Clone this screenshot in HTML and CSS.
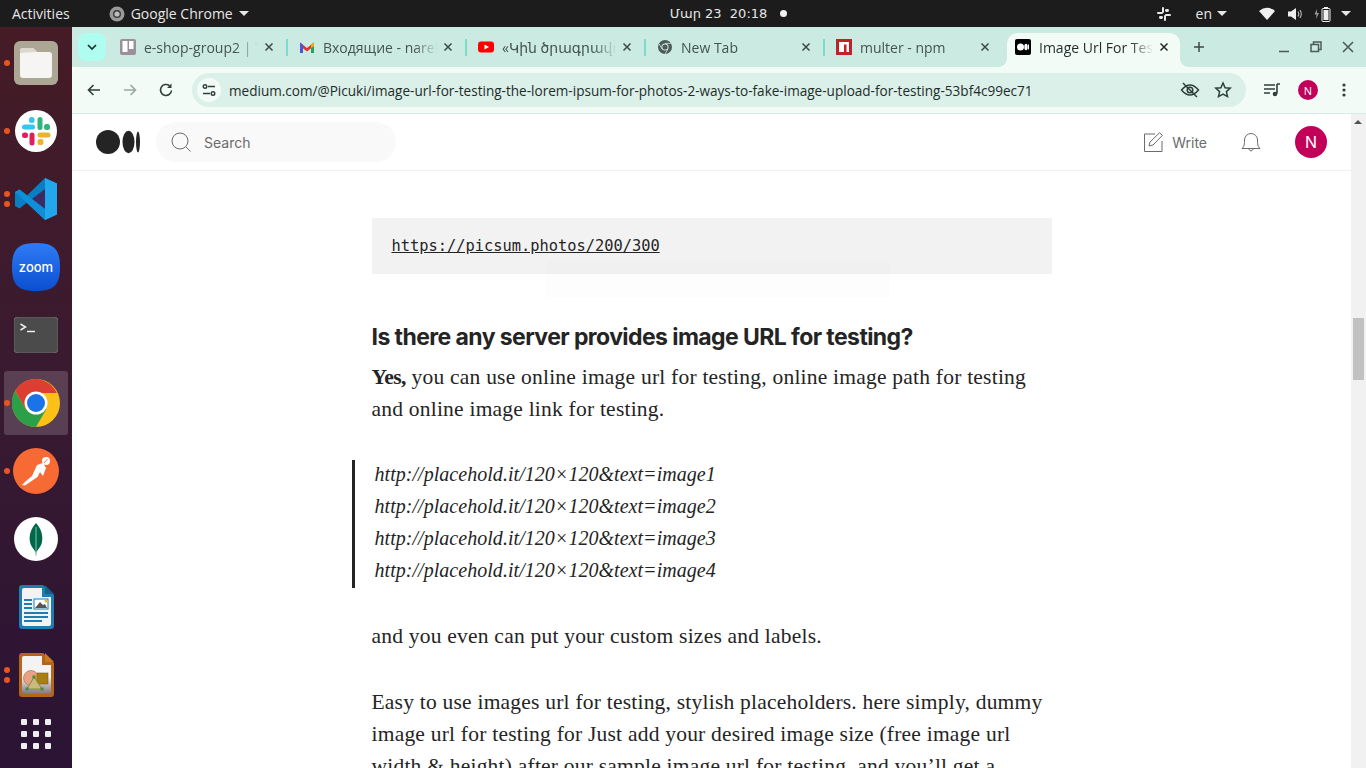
FILE: index.html
```html
<!DOCTYPE html>
<html>

<head>
    <meta charset="utf-8">
    <title>Image Url For Testing</title>
    <link rel="stylesheet" href="styles.css">
</head>

<body>
    <!-- top bar -->
    <header class="topbar">
        <span class="top-activities">Activities</span>
        <span class="top-app">
            <svg width="16" height="16" viewBox="0 0 16 16"><circle cx="8" cy="8" r="7.5" fill="#9a9a9a"/><circle cx="8" cy="8" r="4" fill="#3a3a3a"/><circle cx="8" cy="8" r="2.600" fill="#bdbdbd"/></svg>
            Google Chrome
            <i class="caret"></i>
        </span>
        <span class="top-clock">Մար 23&nbsp;&nbsp;20:18<i class="clock-dot"></i></span>
        <span class="top-tray">
            <svg class="tray-slack" width="14" height="14" viewBox="0 0 14 14" fill="#e8e8e8"><rect x="0" y="5" width="6" height="2" rx="1"/><rect x="8" y="7" width="6" height="2" rx="1"/><rect x="5" y="0" width="2" height="6" rx="1"/><rect x="7" y="8" width="2" height="6" rx="1"/><rect x="8" y="2" width="4" height="3" rx="1.400"/><rect x="2" y="9" width="4" height="3" rx="1.400"/></svg>
            <span class="tray-lang">en<i class="caret"></i></span>
            <svg class="tray-wifi" width="16" height="13" viewBox="0 0 16 13"><path d="M0 4 Q8 -2.500 16 4 L8 13Z" fill="#f0f0f0"/></svg>
            <svg class="tray-sound" width="15" height="14" viewBox="0 0 15 14"><path d="M0 4.500h3L8 1v12L3 9.500H0z" fill="#eee"/><path d="M10 4.500q1.500 2.500 0 5M12 3q2.500 4 0 8" fill="none" stroke="#bbb" stroke-width="1.100"/></svg>
            <svg class="tray-batt" width="18" height="16" viewBox="0 0 18 16"><path d="M3 3 0.500 8.500h2L2 13l3-6H3z" fill="#999"/><rect x="8" y="2.500" width="8" height="13" rx="1" fill="#1c1c1c" stroke="#eee"/><rect x="10" y="1" width="4" height="1.500" fill="#eee"/><rect x="9.500" y="4" width="5" height="10" fill="#eee"/></svg>
            <i class="caret"></i>
        </span>
    </header>

    <div class="desktop">
        <!-- dock -->
        <nav class="dock">
            <div class="dock-item">
                <i class="run-dot"></i>
                <svg width="44" height="44" viewBox="0 0 44 44"><rect width="44" height="44" rx="6" fill="#aca695"/><path d="M6 10q0-3 3-3h10l4 4h12q3 0 3 3v20q0 3-3 3H9q-3 0-3-3z" fill="#f7f5f3"/><path d="M6 12V10q0-3 3-3h10l4 4z" fill="#dcd8cf"/></svg>
            </div>
            <div class="dock-item">
                <i class="run-dot"></i>
                <svg width="42" height="42" viewBox="0 0 42 42"><circle cx="21" cy="21" r="21" fill="#fff"/><rect x="22.500" y="7" width="5" height="13" rx="2.500" fill="#2eb67d"/><rect x="29" y="14" width="6" height="6" rx="2.500" fill="#2eb67d"/><rect x="22.500" y="22.500" width="13" height="5" rx="2.500" fill="#ecb22e"/><rect x="22.500" y="29" width="6" height="6" rx="2.500" fill="#ecb22e"/><rect x="14.500" y="22.500" width="5" height="13" rx="2.500" fill="#e01e5a"/><rect x="7" y="22.500" width="6" height="5.500" rx="2.500" fill="#e01e5a"/><rect x="7" y="14.500" width="13" height="5" rx="2.500" fill="#36c5f0"/><rect x="14" y="7" width="5.500" height="6" rx="2.500" fill="#36c5f0"/></svg>
            </div>
            <div class="dock-item">
                <i class="run-dot dot-up"></i>
                <i class="run-dot dot-down"></i>
                <svg width="42" height="42" viewBox="0 0 42 42"><path d="M30 0 42 5.500v31L30 42 12 24.500 4.500 30.500 0 28V14l4.500-2.500L12 17.500z" fill="#0a7ec2"/><path d="M30 0 42 5.500v31L30 42z" fill="#22a7ef"/><path d="M30 11 17 21l13 10z" fill="#43205a" fill-opacity=".9"/><path d="M4.500 11.500 30 31v11L0 14z" fill="#0f8fd8"/></svg>
            </div>
            <div class="dock-item">
                <svg width="48" height="48" viewBox="0 0 48 48"><defs><linearGradient id="zoomBg" x1="0" y1="0" x2="0" y2="1"><stop offset="0" stop-color="#2f7bf6"/><stop offset="1" stop-color="#0a4fd0"/></linearGradient></defs><path d="M24 0C42 0 48 6 48 24S42 48 24 48 0 42 0 24 6 0 24 0z" fill="url(#zoomBg)"/></svg>
                <span class="zoom-word">zoom</span>
            </div>
            <div class="dock-item">
                <svg width="44" height="36" viewBox="0 0 44 36"><rect width="44" height="36" rx="4" fill="#4b4b4b" stroke="#6a6a6a"/><path d="M6.500 7l5 3-5 3" fill="none" stroke="#eee" stroke-width="1.500"/><path d="M13 14.500h8" stroke="#eee" stroke-width="1.500"/></svg>
            </div>
            <div class="dock-item dock-active">
                <i class="run-dot"></i>
                <svg width="48" height="48" viewBox="0 0 48 48"><circle cx="24" cy="24" r="24" fill="#fbc116"/><path d="M24 0A24 24 0 0 0 3.200 12L13.600 30 24 14h20.800A24 24 0 0 0 24 0z" fill="#dc3e31"/><path d="M3.200 12A24 24 0 0 0 24 48L34.400 30 13.600 30z" fill="#2c9f49"/><circle cx="24" cy="24" r="11.500" fill="#fff"/><circle cx="24" cy="24" r="9" fill="#1a73e8"/></svg>
            </div>
            <div class="dock-item">
                <i class="run-dot"></i>
                <svg width="46" height="46" viewBox="0 0 46 46"><circle cx="23" cy="23" r="23" fill="#f76a34"/><path d="M9 37 13 33 19 28 24 17 30 15 33 20 30 28 27 24 24.500 29 12 37.500z" fill="#fff"/><circle cx="33" cy="13" r="4" fill="#fff"/><path d="M31 15l3.500-4" stroke="#f76a34" stroke-width=".8"/></svg>
            </div>
            <div class="dock-item">
                <svg width="44" height="44" viewBox="0 0 44 44"><circle cx="22" cy="22" r="22" fill="#fff"/><path d="M22 6C28 13 29 19 28 25 27 30 24 32 22.500 35L22 39 21.500 35C20 32 17 30 16 25 15 19 16 13 22 6z" fill="#00684a"/><path d="M22 10v29" stroke="#a8d8c2" stroke-width=".8"/></svg>
            </div>
            <div class="dock-item">
                <svg width="36" height="46" viewBox="0 0 36 46"><path d="M4 1h21l11 10v31q0 3-3 3H4q-3 0-3-3V4q0-3 3-3z" fill="#1d7eaf"/><path d="M6 4h18v9h9v27q0 2-2 2H6q-2 0-2-2V6q0-2 2-2z" fill="#f3f3f3"/><path d="M27 1l9 9h-9z" fill="#14618f"/><path d="M6 15h8v2H6zM6 19h8v2H6zM6 23h8v2H6zM6 28h24v2H6zM6 32h24v2H6zM6 36h18v2H6z" fill="#1d7eaf"/><rect x="16" y="15" width="14" height="10" fill="#fff" stroke="#1d7eaf"/><path d="M17 24l5-6 3 3 2-1 2 4z" fill="#555"/><circle cx="28" cy="17" r="1.500" fill="#f0b429"/></svg>
            </div>
            <div class="dock-item">
                <i class="run-dot dot-up"></i>
                <i class="run-dot dot-down"></i>
                <svg width="36" height="46" viewBox="0 0 36 46"><defs><linearGradient id="impBg" x1="0" y1="0" x2="0" y2="1"><stop offset=".55" stop-color="#f3f3f3"/><stop offset="1" stop-color="#7d7480"/></linearGradient></defs><path d="M4 1h21l11 10v31q0 3-3 3H4q-3 0-3-3V4q0-3 3-3z" fill="#b5651a"/><path d="M6 4h18v9h9v27q0 2-2 2H6q-2 0-2-2V6q0-2 2-2z" fill="url(#impBg)"/><path d="M27 1l9 9h-9z" fill="#c87a1e"/><circle cx="13" cy="26" r="7.500" fill="#e9a184" stroke="#a6654a" stroke-width=".6"/><rect x="19" y="21" width="11" height="11" fill="#a87f10" stroke="#7d5e0a" stroke-width=".6"/><path d="M16 25 9 37h15z" fill="#cdb97c" stroke="#78903c"/><path d="M14.500 23.500h3v3h-3zM7.500 35.500h3v3h-3zM22.500 35.500h3v3h-3z" fill="#4d8a35"/></svg>
            </div>
            <div class="dock-grid">
                <i></i><i></i><i></i>
                <i></i><i></i><i></i>
                <i></i><i></i><i></i>
            </div>
        </nav>

        <!-- chrome window -->
        <main class="browser">
            <div class="tabstrip">
                <button class="tab-search">
                    <svg width="10" height="6" viewBox="0 0 10 6"><path d="M1 1l4 4 4-4" fill="none" stroke="#1f2d2a" stroke-width="1.700"/></svg>
                </button>

                <div class="tab">
                    <svg class="favicon" width="16" height="16" viewBox="0 0 16 16"><rect width="16" height="16" rx="2" fill="#9b8f99"/><rect x="2.500" y="2" width="5" height="11" fill="#fff"/><rect x="9" y="2" width="4.500" height="8" fill="#fff"/></svg>
                    <span class="tab-title">e-shop-group2 | Trello</span>
                    <svg class="tab-close" width="16" height="16" viewBox="0 0 16 16"><path d="M4.500 4.500l7 7m0-7l-7 7" stroke="#3b4a46" stroke-width="1.500"/></svg>
                </div>
                <div class="tab">
                    <svg class="favicon" width="16" height="16" viewBox="0 0 16 16"><path d="M1 3.500 8 9l7-5.500V7L8 12.500 1 7z" fill="#e2332b"/><path d="M1 3.500 4 5.800V14H1z" fill="#4a55d8"/><path d="M12 5.800 15 3.500V14h-3z" fill="#1fa463"/><path d="M12 5.800 15 3.500V7l-3 2.300z" fill="#f9ab00"/></svg>
                    <span class="tab-title">Входящие - narek</span>
                    <svg class="tab-close" width="16" height="16" viewBox="0 0 16 16"><path d="M4.500 4.500l7 7m0-7l-7 7" stroke="#3b4a46" stroke-width="1.500"/></svg>
                </div>
                <div class="tab">
                    <svg class="favicon" width="16" height="16" viewBox="0 0 16 16"><rect y="2.500" width="16" height="11" rx="3" fill="#f00"/><path d="M6.500 5.500v5L11 8z" fill="#fff"/></svg>
                    <span class="tab-title">«Կին ծրագրավորող</span>
                    <svg class="tab-close" width="16" height="16" viewBox="0 0 16 16"><path d="M4.500 4.500l7 7m0-7l-7 7" stroke="#3b4a46" stroke-width="1.500"/></svg>
                </div>
                <div class="tab">
                    <svg class="favicon" width="16" height="16" viewBox="0 0 16 16"><circle cx="8" cy="8" r="7" fill="#4d5b57"/><circle cx="8" cy="8" r="3.600" fill="#cbeae2"/><circle cx="8" cy="8" r="2.600" fill="#4d5b57"/><path d="M8 4.400h6M5 10l-3-5.300M11 10l-3 5" stroke="#cbeae2" stroke-width=".8"/></svg>
                    <span class="tab-title">New Tab</span>
                    <svg class="tab-close" width="16" height="16" viewBox="0 0 16 16"><path d="M4.500 4.500l7 7m0-7l-7 7" stroke="#3b4a46" stroke-width="1.500"/></svg>
                </div>
                <div class="tab tab-prev">
                    <svg class="favicon" width="16" height="16" viewBox="0 0 16 16"><rect width="16" height="16" fill="#c12127"/><path d="M3 3h10v10h-2.500V5.500H8V13H3z" fill="#fff"/></svg>
                    <span class="tab-title">multer - npm</span>
                    <svg class="tab-close" width="16" height="16" viewBox="0 0 16 16"><path d="M4.500 4.500l7 7m0-7l-7 7" stroke="#3b4a46" stroke-width="1.500"/></svg>
                </div>
                <div class="tab tab-current">
                    <i class="flare flare-l"></i>
                    <i class="flare flare-r"></i>
                    <svg class="favicon" width="16" height="16" viewBox="0 0 16 16"><rect width="16" height="16" rx="2" fill="#000"/><ellipse cx="5.500" cy="8" rx="3.500" ry="3.500" fill="#fff"/><ellipse cx="11" cy="8" rx="1.700" ry="3.200" fill="#fff"/><ellipse cx="13.500" cy="8" rx=".6" ry="3" fill="#fff"/></svg>
                    <span class="tab-title">Image Url For Testing</span>
                    <svg class="tab-close" width="16" height="16" viewBox="0 0 16 16"><path d="M4.500 4.500l7 7m0-7l-7 7" stroke="#1f2d2a" stroke-width="1.500"/></svg>
                </div>

                <svg class="tab-new" width="12" height="12" viewBox="0 0 12 12"><path d="M6 1v10M1 6h10" stroke="#3b4a46" stroke-width="1.500"/></svg>

                <div class="win-btns">
                    <svg width="12" height="12" viewBox="0 0 12 12"><path d="M1 10.500h10" stroke="#4d5b57" stroke-width="1.500"/></svg>
                    <svg width="12" height="12" viewBox="0 0 12 12"><path d="M3.500 3V1h7.500v7.500H8.500" fill="none" stroke="#4d5b57" stroke-width="1.500"/><rect x="1" y="3.500" width="7.500" height="7" fill="none" stroke="#4d5b57" stroke-width="1.500"/></svg>
                    <svg width="12" height="12" viewBox="0 0 12 12"><path d="M1 1l10 10M11 1L1 11" stroke="#4d5b57" stroke-width="1.600"/></svg>
                </div>
            </div>

            <div class="toolbar">
                <svg class="tool-btn" width="16" height="16" viewBox="0 0 16 16"><path d="M14 8H3M7.500 3 2.500 8l5 5" fill="none" stroke="#2f3f3b" stroke-width="1.600"/></svg>
                <svg class="tool-btn" width="16" height="16" viewBox="0 0 16 16"><path d="M2 8h11M8.500 3l5 5-5 5" fill="none" stroke="#9aa8a4" stroke-width="1.600"/></svg>
                <svg class="tool-btn" width="16" height="16" viewBox="0 0 16 16"><path d="M13.500 8.500A5.500 5.500 0 1 1 11.500 3.700" fill="none" stroke="#2f3f3b" stroke-width="1.600"/><path d="M13.500 1.500v4.500H9z" fill="#2f3f3b"/></svg>

                <div class="omnibox">
                    <span class="site-info">
                        <svg width="14" height="14" viewBox="0 0 14 14" fill="none" stroke="#2f3f3b" stroke-width="1.400"><path d="M6 3.500h7M1 10.500h7"/><circle cx="3" cy="3.500" r="1.800"/><circle cx="11" cy="10.500" r="1.800"/></svg>
                    </span>
                    <span class="omni-url">medium.com/@Picuki/image-url-for-testing-the-lorem-ipsum-for-photos-2-ways-to-fake-image-upload-for-testing-53bf4c99ec71</span>
                    <svg class="omni-icon" width="20" height="18" viewBox="0 0 20 18" fill="none" stroke="#2f3f3b" stroke-width="1.500"><path d="M1.500 9Q10 -1 18.500 9 10 19 1.500 9z"/><circle cx="10" cy="9" r="2.800"/><path d="M3 2l14 14"/></svg>
                    <svg class="omni-icon" width="18" height="18" viewBox="0 0 18 18"><path d="M9 2l2.100 4.700 5.100.5-3.800 3.400 1.100 5L9 13l-4.500 2.600 1.100-5L1.800 7.200l5.100-.5z" fill="none" stroke="#2f3f3b" stroke-width="1.500"/></svg>
                </div>

                <svg class="tool-media" width="16" height="14" viewBox="0 0 16 14"><path d="M0 2h11M0 6h11M0 10h6" stroke="#2f3f3b" stroke-width="1.500"/><path d="M13 1v9.500" stroke="#2f3f3b" stroke-width="1.600"/><path d="M13 1h3" stroke="#2f3f3b" stroke-width="1.500"/><circle cx="11" cy="11" r="2.300" fill="#2f3f3b"/></svg>
                <span class="tool-avatar">N</span>
                <svg class="tool-menu" width="4" height="14" viewBox="0 0 4 14" fill="#2f3f3b"><circle cx="2" cy="2" r="1.600"/><circle cx="2" cy="7" r="1.600"/><circle cx="2" cy="12" r="1.600"/></svg>
            </div>

            <div class="viewport">
                <div class="page">
                    <div class="med-header">
                        <svg class="med-logo" width="44" height="24" viewBox="0 0 44 24" fill="#242424"><circle cx="12" cy="12" r="12"/><ellipse cx="32.500" cy="12" rx="6" ry="11.300"/><ellipse cx="42" cy="12" rx="2" ry="10.400"/></svg>
                        <div class="med-search">
                            <svg width="20" height="20" viewBox="0 0 20 20" fill="none" stroke="#6b6b6b"><circle cx="9" cy="9" r="8"/><path d="M15 15l4.500 4.500"/></svg>
                            <span>Search</span>
                        </div>
                        <div class="med-actions">
                            <span class="med-write">
                                <svg width="20" height="20" viewBox="0 0 20 20" fill="none" stroke="#6b6b6b"><path d="M11 2H.5v17.500H18V9"/><path d="M5 14l1-4L15.500.8l3 2.500L9 13z"/></svg>
                                Write
                            </span>
                            <svg class="med-bell" width="20" height="20" viewBox="0 0 20 20" fill="none" stroke="#6b6b6b"><path d="M1 16.500q2.500-1.500 2.500-6V8a6.500 6.500 0 0 1 13 0v2.500q0 4.500 2.500 6z"/><path d="M7.500 16.500q2.500 5 5 0"/></svg>
                            <span class="med-avatar">N</span>
                        </div>
                    </div>

                    <article class="article">
                        <pre class="code-block"><a href="#">https://picsum.photos/200/300</a></pre>

                        <h2 class="art-heading">Is there any server provides image URL for testing?</h2>
                        <p class="art-text art-first"><strong>Yes,</strong> you can use online image url for testing, online image path for testing and online image link for testing.</p>

                        <blockquote class="art-quote">
                            <div class="quote-lines">
                                http://placehold.it/120×120&amp;text=image1<br>
                                http://placehold.it/120×120&amp;text=image2<br>
                                http://placehold.it/120×120&amp;text=image3<br>
                                http://placehold.it/120×120&amp;text=image4
                            </div>
                        </blockquote>

                        <p class="art-text art-after">and you even can put your custom sizes and labels.</p>
                        <p class="art-text art-last">Easy to use images url for testing, stylish placeholders. here simply, dummy image url for testing for Just add your desired image size (free image url width &amp; height) after our sample image url for testing, and you’ll get a placeholder image.</p>
                    </article>

                    <div class="ghost-popup"></div>
                </div>

                <div class="scrollbar">
                    <i class="scroll-arrow"></i>
                    <i class="scroll-thumb"></i>
                </div>
            </div>
        </main>
    </div>
</body>

</html>
```

FILE: styles.css
```css
* {
    box-sizing: border-box;
}

html, body {
    height: 768px;
    margin: 0;
    overflow: hidden;
}

body {
    display: flex;
    flex-direction: column;
    background-color: #fff;
    font-family: "Open Sans", "Noto Sans", "DejaVu Sans", sans-serif;
}

svg {
    display: block;
    flex: none;
}

/* top bar */
.topbar {
    display: flex;
    align-items: center;
    flex: none;
    height: 27px;
    padding-left: 12px;
    background-color: #1c1c1c;
    color: #e6e6e6;
    font-size: 14px;
}

.top-app {
    display: flex;
    align-items: center;
    gap: 6px;
    margin-left: 39px;
}

.caret {
    display: inline-block;
    width: 0;
    height: 0;
    border-left: 5px solid transparent;
    border-right: 5px solid transparent;
    border-top: 5px solid #e6e6e6;
}

.top-clock {
    display: flex;
    align-items: center;
    margin-left: 421px;
    font-family: "DejaVu Sans", sans-serif;
    font-size: 13px;
}

.clock-dot {
    width: 7px;
    height: 7px;
    margin-left: 13px;
    border-radius: 50%;
    background-color: #f2f2f2;
}

.top-tray {
    display: flex;
    align-items: center;
    margin-left: auto;
    padding-right: 15px;
}

.tray-lang {
    display: flex;
    align-items: center;
    gap: 5px;
    margin-left: 25px;
}

.tray-wifi {
    margin-left: 32px;
}

.tray-sound {
    margin-left: 13px;
}

.tray-batt {
    margin-left: 11px;
    margin-right: 9px;
}

/* dock */
.desktop {
    display: flex;
    flex: 1;
    min-height: 0;
}

.dock {
    flex: none;
    width: 72px;
    padding-top: 2px;
    background: linear-gradient(#451c26, #3a1a30 45%, #2a1334);
}

.dock-item {
    position: relative;
    display: flex;
    align-items: center;
    justify-content: center;
    height: 68px;
}

.dock-active::before {
    content: "";
    position: absolute;
    top: 2px;
    left: 4px;
    width: 64px;
    height: 64px;
    border-radius: 3px;
    background-color: rgba(255, 255, 255, .17);
}

.dock-item svg {
    position: relative;
}

.run-dot {
    position: absolute;
    top: 31px;
    left: 4px;
    width: 6px;
    height: 6px;
    border-radius: 50%;
    background-color: #e95420;
}

.dot-up {
    top: 26px;
}

.dot-down {
    top: 36px;
}

.zoom-word {
    position: absolute;
    top: 27px;
    left: 0;
    width: 100%;
    color: #fff;
    font-family: "Inter", sans-serif;
    font-size: 13px;
    font-weight: 500;
    line-height: 14px;
    text-align: center;
}

.dock-grid {
    display: grid;
    grid-template-columns: repeat(3, 6px);
    gap: 6px;
    justify-content: center;
    align-content: center;
    height: 50px;
}

.dock-grid i {
    height: 6px;
    border-radius: 1px;
    background-color: #eeeeee;
}

/* chrome window */
.browser {
    display: flex;
    flex: 1;
    flex-direction: column;
    min-width: 0;
}

.tabstrip {
    display: flex;
    align-items: center;
    flex: none;
    height: 40px;
    padding-left: 6px;
    background-color: #cbeae2;
    color: #44544f;
    font-size: 14px;
}

.tab-search {
    display: flex;
    align-items: center;
    justify-content: center;
    flex: none;
    width: 28px;
    height: 28px;
    margin-right: 2px;
    padding: 0;
    border: 0;
    border-radius: 8px;
    background-color: #aefdf0;
}

.tab {
    position: relative;
    display: flex;
    align-items: center;
    flex: none;
    width: 179px;
    height: 40px;
    padding: 0 10px 0 12px;
}

.tab::after {
    content: "";
    position: absolute;
    top: 12px;
    right: -1px;
    width: 2px;
    height: 17px;
    background-color: #7cdcc9;
}

.favicon {
    margin-right: 8px;
}

.tab-title {
    flex: 1;
    min-width: 0;
    overflow: hidden;
    white-space: nowrap;
    -webkit-mask-image: linear-gradient(to right, #000 78%, transparent 98%);
    mask-image: linear-gradient(to right, #000 78%, transparent 98%);
}

.tab-current {
    color: #1f2d2a;
    z-index: 1;
}

.tab-current::before {
    content: "";
    position: absolute;
    top: 6px;
    left: 4px;
    right: 2px;
    bottom: 0;
    border-radius: 10px 10px 0 0;
    background-color: #f3fbf7;
}

.tab-current::after,
.tab-prev::after {
    display: none;
}

.tab-current > * {
    position: relative;
}

.tab-current > .flare {
    position: absolute;
    bottom: 0;
    width: 8px;
    height: 8px;
}

.tab-current > .flare-l {
    left: -4px;
    background: radial-gradient(circle at 0 0, transparent 7.500px, #f3fbf7 8px);
}

.tab-current > .flare-r {
    right: -6px;
    background: radial-gradient(circle at 100% 0, transparent 7.500px, #f3fbf7 8px);
}

.tab-new {
    margin-left: 11px;
}

.win-btns {
    display: flex;
    gap: 20px;
    margin-left: auto;
    padding-right: 12px;
}

/* toolbar */
.toolbar {
    display: flex;
    align-items: center;
    flex: none;
    height: 47px;
    padding-left: 14px;
    border-bottom: 1px solid #d5eee5;
    border-radius: 8px 0 0 0;
    background-color: #f3fbf7;
}

.tool-btn {
    margin-right: 20px;
}

.omnibox {
    display: flex;
    align-items: center;
    width: 1054px;
    height: 34px;
    margin-left: -2px;
    padding-left: 5px;
    border-radius: 17px;
    background-color: #daf0e8;
}

.site-info {
    display: flex;
    align-items: center;
    justify-content: center;
    flex: none;
    width: 24px;
    height: 24px;
    margin-right: 8px;
    border-radius: 50%;
    background-color: #f3fbf7;
}

.omni-url {
    flex: 1;
    overflow: hidden;
    color: #1f2d2a;
    font-size: 13.570px;
    white-space: nowrap;
}

.omni-icon {
    margin-right: 14px;
}

.tool-media {
    margin-left: 18px;
}

.tool-avatar {
    display: flex;
    align-items: center;
    justify-content: center;
    width: 20px;
    height: 20px;
    margin-left: 18px;
    border-radius: 50%;
    background-color: #c2005a;
    color: #fff;
    font-size: 11px;
}

.tool-menu {
    margin-left: 24px;
}

/* page */
.viewport {
    display: flex;
    flex: 1;
    min-height: 0;
}

.page {
    position: relative;
    flex: 1;
    min-width: 0;
    overflow: hidden;
}

.med-header {
    display: flex;
    align-items: center;
    height: 57px;
    padding: 0 24px;
    border-bottom: 1px solid #f2f2f2;
}

.med-search {
    display: flex;
    align-items: center;
    gap: 13px;
    width: 240px;
    height: 40px;
    margin-left: 16px;
    padding-left: 15px;
    border-radius: 20px;
    background-color: #f9f9f9;
    color: #6b6b6b;
    font-family: "Inter", sans-serif;
    font-size: 14px;
}

.med-actions {
    display: flex;
    align-items: center;
    margin-left: auto;
}

.med-write {
    display: flex;
    align-items: center;
    gap: 8px;
    color: #6b6b6b;
    font-family: "Inter", sans-serif;
    font-size: 14px;
}

.med-bell {
    margin-left: 34px;
}

.med-avatar {
    display: flex;
    align-items: center;
    justify-content: center;
    width: 32px;
    height: 32px;
    margin-left: 34px;
    border-radius: 50%;
    background-color: #c2005a;
    color: #fff;
    font-family: "Inter", sans-serif;
    font-size: 16px;
}

.article {
    width: 680px;
    margin: 47px auto 0;
    color: #242424;
}

.code-block {
    height: 56px;
    margin: 0;
    padding: 0 20px;
    background-color: #f2f2f2;
    font-family: "DejaVu Sans Mono", monospace;
    font-size: 15.360px;
    line-height: 56px;
}

.code-block a {
    color: #242424;
}

.art-heading {
    margin: 48px 0 0;
    font-family: "Inter", sans-serif;
    font-size: 23px;
    font-weight: 700;
    line-height: 30px;
    letter-spacing: -.58px;
}

.art-text {
    margin: 0;
    font-family: "Liberation Serif", serif;
    font-size: 21.500px;
    line-height: 32px;
    letter-spacing: .22px;
}

.art-text strong {
    letter-spacing: -.5px;
}

.art-first {
    margin-top: 9px;
}

.art-quote {
    display: flow-root;
    margin: 35px 0 0 -20px;
    padding-left: 20px;
    border-left: 3px solid #242424;
    font-family: "Liberation Serif", serif;
    font-size: 20px;
    font-style: italic;
    line-height: 32px;
    letter-spacing: .04px;
}

.quote-lines {
    margin: -2px 0 2px;
}

.art-after {
    margin-top: 32px;
}

.art-last {
    margin-top: 34px;
}

/* faint popup fading out over the article */
.ghost-popup {
    position: absolute;
    top: 146px;
    left: 474px;
    width: 344px;
    height: 38px;
    border-radius: 4px;
    background-color: rgba(0, 0, 0, .008);
}

.scrollbar {
    position: relative;
    flex: none;
    width: 15px;
    background-color: #f1f1f1;
}

.scroll-arrow {
    position: absolute;
    top: 6px;
    left: 3px;
    width: 0;
    height: 0;
    border-left: 4px solid transparent;
    border-right: 4px solid transparent;
    border-bottom: 4px solid #505050;
}

.scroll-thumb {
    position: absolute;
    top: 204px;
    left: 2px;
    width: 11px;
    height: 62px;
    background-color: #c1c1c1;
}
```
